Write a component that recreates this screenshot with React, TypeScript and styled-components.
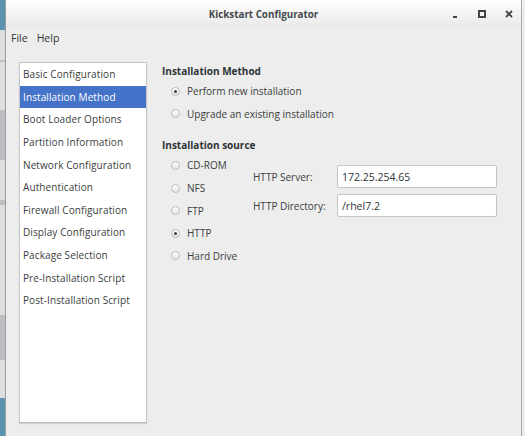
import React from "react";
import styled, { createGlobalStyle } from "styled-components";

const GlobalStyle = createGlobalStyle`
  html, body {
    margin: 0;
    padding: 0;
    background: #ededed;
  }
  body {
    font-family: "Open Sans", "Lato", "DejaVu Sans", sans-serif;
    color: #2e3436;
  }
`;

const Screen = styled.div`
  display: flex;
  width: 525px;
  height: 436px;
  overflow: hidden;
`;

// the terminal window lying behind, peeking out on the left
const BehindStrip = styled.div`
  width: 5px;
  flex-shrink: 0;
  background:
    linear-gradient(
      180deg,
      transparent 0px,
      transparent 60px,
      rgba(90, 100, 110, 0.25) 60px,
      rgba(90, 100, 110, 0.25) 62px,
      transparent 62px,
      transparent 110px,
      rgba(90, 100, 110, 0.25) 110px,
      rgba(90, 100, 110, 0.25) 160px,
      transparent 160px,
      transparent 200px,
      rgba(90, 100, 110, 0.25) 200px,
      rgba(90, 100, 110, 0.25) 205px,
      transparent 205px,
      transparent 315px,
      rgba(90, 100, 110, 0.25) 315px,
      rgba(90, 100, 110, 0.25) 360px,
      transparent 360px
    ),
    linear-gradient(
      180deg,
      #5a93b0 0px,
      #5a93b0 30px,
      #dedede 30px,
      #dedede 398px,
      #5a93b0 398px
    );
  border-right: 1px solid #9c9c9c;
`;

const Window = styled.div`
  flex: 1;
  display: flex;
  flex-direction: column;
  background: #ededed;
  border-right: 1px solid #a8a8a8;
  margin-right: 3px;
`;

const TitleBar = styled.div`
  height: 28px;
  display: grid;
  grid-template-columns: 1fr auto 1fr;
  align-items: center;
  background: linear-gradient(180deg, #ffffff 0%, #f1f1f1 60%, #e8e8e8 100%);
`;

const Title = styled.div`
  grid-column: 2;
  font-family: "Open Sans", sans-serif;
  font-weight: 700;
  font-size: 9.8px;
  color: #45494b;
`;

const Controls = styled.div`
  grid-column: 3;
  display: flex;
  justify-content: flex-end;
  align-items: center;
  gap: 17px;
  padding-right: 7px;
`;

const ControlButton = styled.span`
  width: 10px;
  height: 10px;
  display: flex;
  align-items: center;
  justify-content: center;
  color: #404446;
`;

const MenuBar = styled.div`
  height: 20px;
  display: flex;
  align-items: center;
  gap: 9px;
  padding-left: 5px;
  font-size: 10.5px;
`;

const MenuItem = styled.span`
  color: #2e3436;
`;

const Body = styled.div`
  display: flex;
  padding: 14px 0 0 13px;
`;

const Sidebar = styled.div`
  width: 126px;
  height: 359px;
  background: #ffffff;
  border: 1px solid #c6c6c6;
  border-bottom-color: #b8b8b8;
  box-shadow: 0 1px 1px rgba(0, 0, 0, 0.12);
  display: flex;
  flex-direction: column;
`;

const NavItem = styled.div<{ $active?: boolean }>`
  height: 22.6px;
  display: flex;
  align-items: center;
  padding-left: 3px;
  font-size: 10px;
  letter-spacing: 0.1px;
  white-space: nowrap;
  background: ${(p) => (p.$active ? "#4573c9" : "transparent")};
  color: ${(p) => (p.$active ? "#ffffff" : "#3a3e40")};
`;

const Content = styled.div`
  flex: 1;
  display: flex;
  flex-direction: column;
  padding: 2px 0 0 15px;
`;

const SectionTitle = styled.div<{ $gap?: number }>`
  font-size: 10px;
  font-weight: 700;
  color: #2e3436;
  height: 14px;
  display: flex;
  align-items: center;
  margin-top: ${(p) => p.$gap ?? 0}px;
  margin-bottom: 2px;
`;

const RadioRow = styled.label`
  height: 22.6px;
  display: flex;
  align-items: center;
  gap: 7px;
  padding-left: 9px;
  font-size: 10px;
  color: #3a3e40;
  white-space: nowrap;
`;

const RadioDot = styled.span<{ $checked?: boolean }>`
  width: 9px;
  height: 9px;
  border-radius: 50%;
  border: 1px solid #b9bcbd;
  background: linear-gradient(180deg, #fdfdfd, #e4e4e4);
  display: flex;
  align-items: center;
  justify-content: center;
  box-sizing: border-box;
  flex-shrink: 0;

  &::after {
    content: "";
    width: 3px;
    height: 3px;
    border-radius: 50%;
    background: ${(p) => (p.$checked ? "#3a3e40" : "transparent")};
  }
`;

const SourceGrid = styled.div`
  display: flex;
`;

const SourceRadios = styled.div`
  width: 91px;
  display: flex;
  flex-direction: column;
`;

const Fields = styled.div`
  display: grid;
  grid-template-columns: 84px 160px;
  row-gap: 6px;
  margin-top: 11px;
  align-content: start;
`;

const FieldLabel = styled.span`
  font-size: 10px;
  color: #3a3e40;
  display: flex;
  align-items: center;
`;

const TextInput = styled.div`
  height: 23px;
  box-sizing: border-box;
  border: 1px solid #c3c5c6;
  border-radius: 2px;
  background: #ffffff;
  display: flex;
  align-items: center;
  padding-left: 4px;
  font-size: 10.5px;
  color: #2e3436;
`;

const navItems = [
  "Basic Configuration",
  "Installation Method",
  "Boot Loader Options",
  "Partition Information",
  "Network Configuration",
  "Authentication",
  "Firewall Configuration",
  "Display Configuration",
  "Package Selection",
  "Pre-Installation Script",
  "Post-Installation Script",
];

const sources = [
  { label: "CD-ROM", checked: false },
  { label: "NFS", checked: false },
  { label: "FTP", checked: false },
  { label: "HTTP", checked: true },
  { label: "Hard Drive", checked: false },
];

const Radio: React.FC<{ label: string; checked?: boolean }> = ({ label, checked }) => (
  <RadioRow>
    <RadioDot $checked={checked} />
    {label}
  </RadioRow>
);

export default function App() {
  return (
    <>
      <GlobalStyle />
      <Screen>
        <BehindStrip />
        <Window>
          <TitleBar>
            <Title>Kickstart Configurator</Title>
            <Controls>
              <ControlButton>
                <svg width="8" height="8" viewBox="0 0 8 8">
                  <rect x="2" y="6" width="4" height="2" fill="currentColor" />
                </svg>
              </ControlButton>
              <ControlButton>
                <svg width="8" height="8" viewBox="0 0 8 8">
                  <rect x="1" y="1" width="6" height="6" fill="none" stroke="currentColor" strokeWidth="2" />
                </svg>
              </ControlButton>
              <ControlButton>
                <svg width="8" height="8" viewBox="0 0 8 8">
                  <path d="M1 1 L7 7 M7 1 L1 7" stroke="currentColor" strokeWidth="1.8" />
                </svg>
              </ControlButton>
            </Controls>
          </TitleBar>

          <MenuBar>
            <MenuItem>File</MenuItem>
            <MenuItem>Help</MenuItem>
          </MenuBar>

          <Body>
            <Sidebar>
              {navItems.map((item) => (
                <NavItem key={item} $active={item === "Installation Method"}>
                  {item}
                </NavItem>
              ))}
            </Sidebar>

            <Content>
              <SectionTitle>Installation Method</SectionTitle>
              <Radio label="Perform new installation" checked />
              <Radio label="Upgrade an existing installation" />

              <SectionTitle $gap={13}>Installation source</SectionTitle>
              <SourceGrid>
                <SourceRadios>
                  {sources.map((s) => (
                    <Radio key={s.label} label={s.label} checked={s.checked} />
                  ))}
                </SourceRadios>
                <Fields>
                  <FieldLabel>HTTP Server:</FieldLabel>
                  <TextInput>172.25.254.65</TextInput>
                  <FieldLabel>HTTP Directory:</FieldLabel>
                  <TextInput>/rhel7.2</TextInput>
                </Fields>
              </SourceGrid>
            </Content>
          </Body>
        </Window>
      </Screen>
    </>
  );
}
